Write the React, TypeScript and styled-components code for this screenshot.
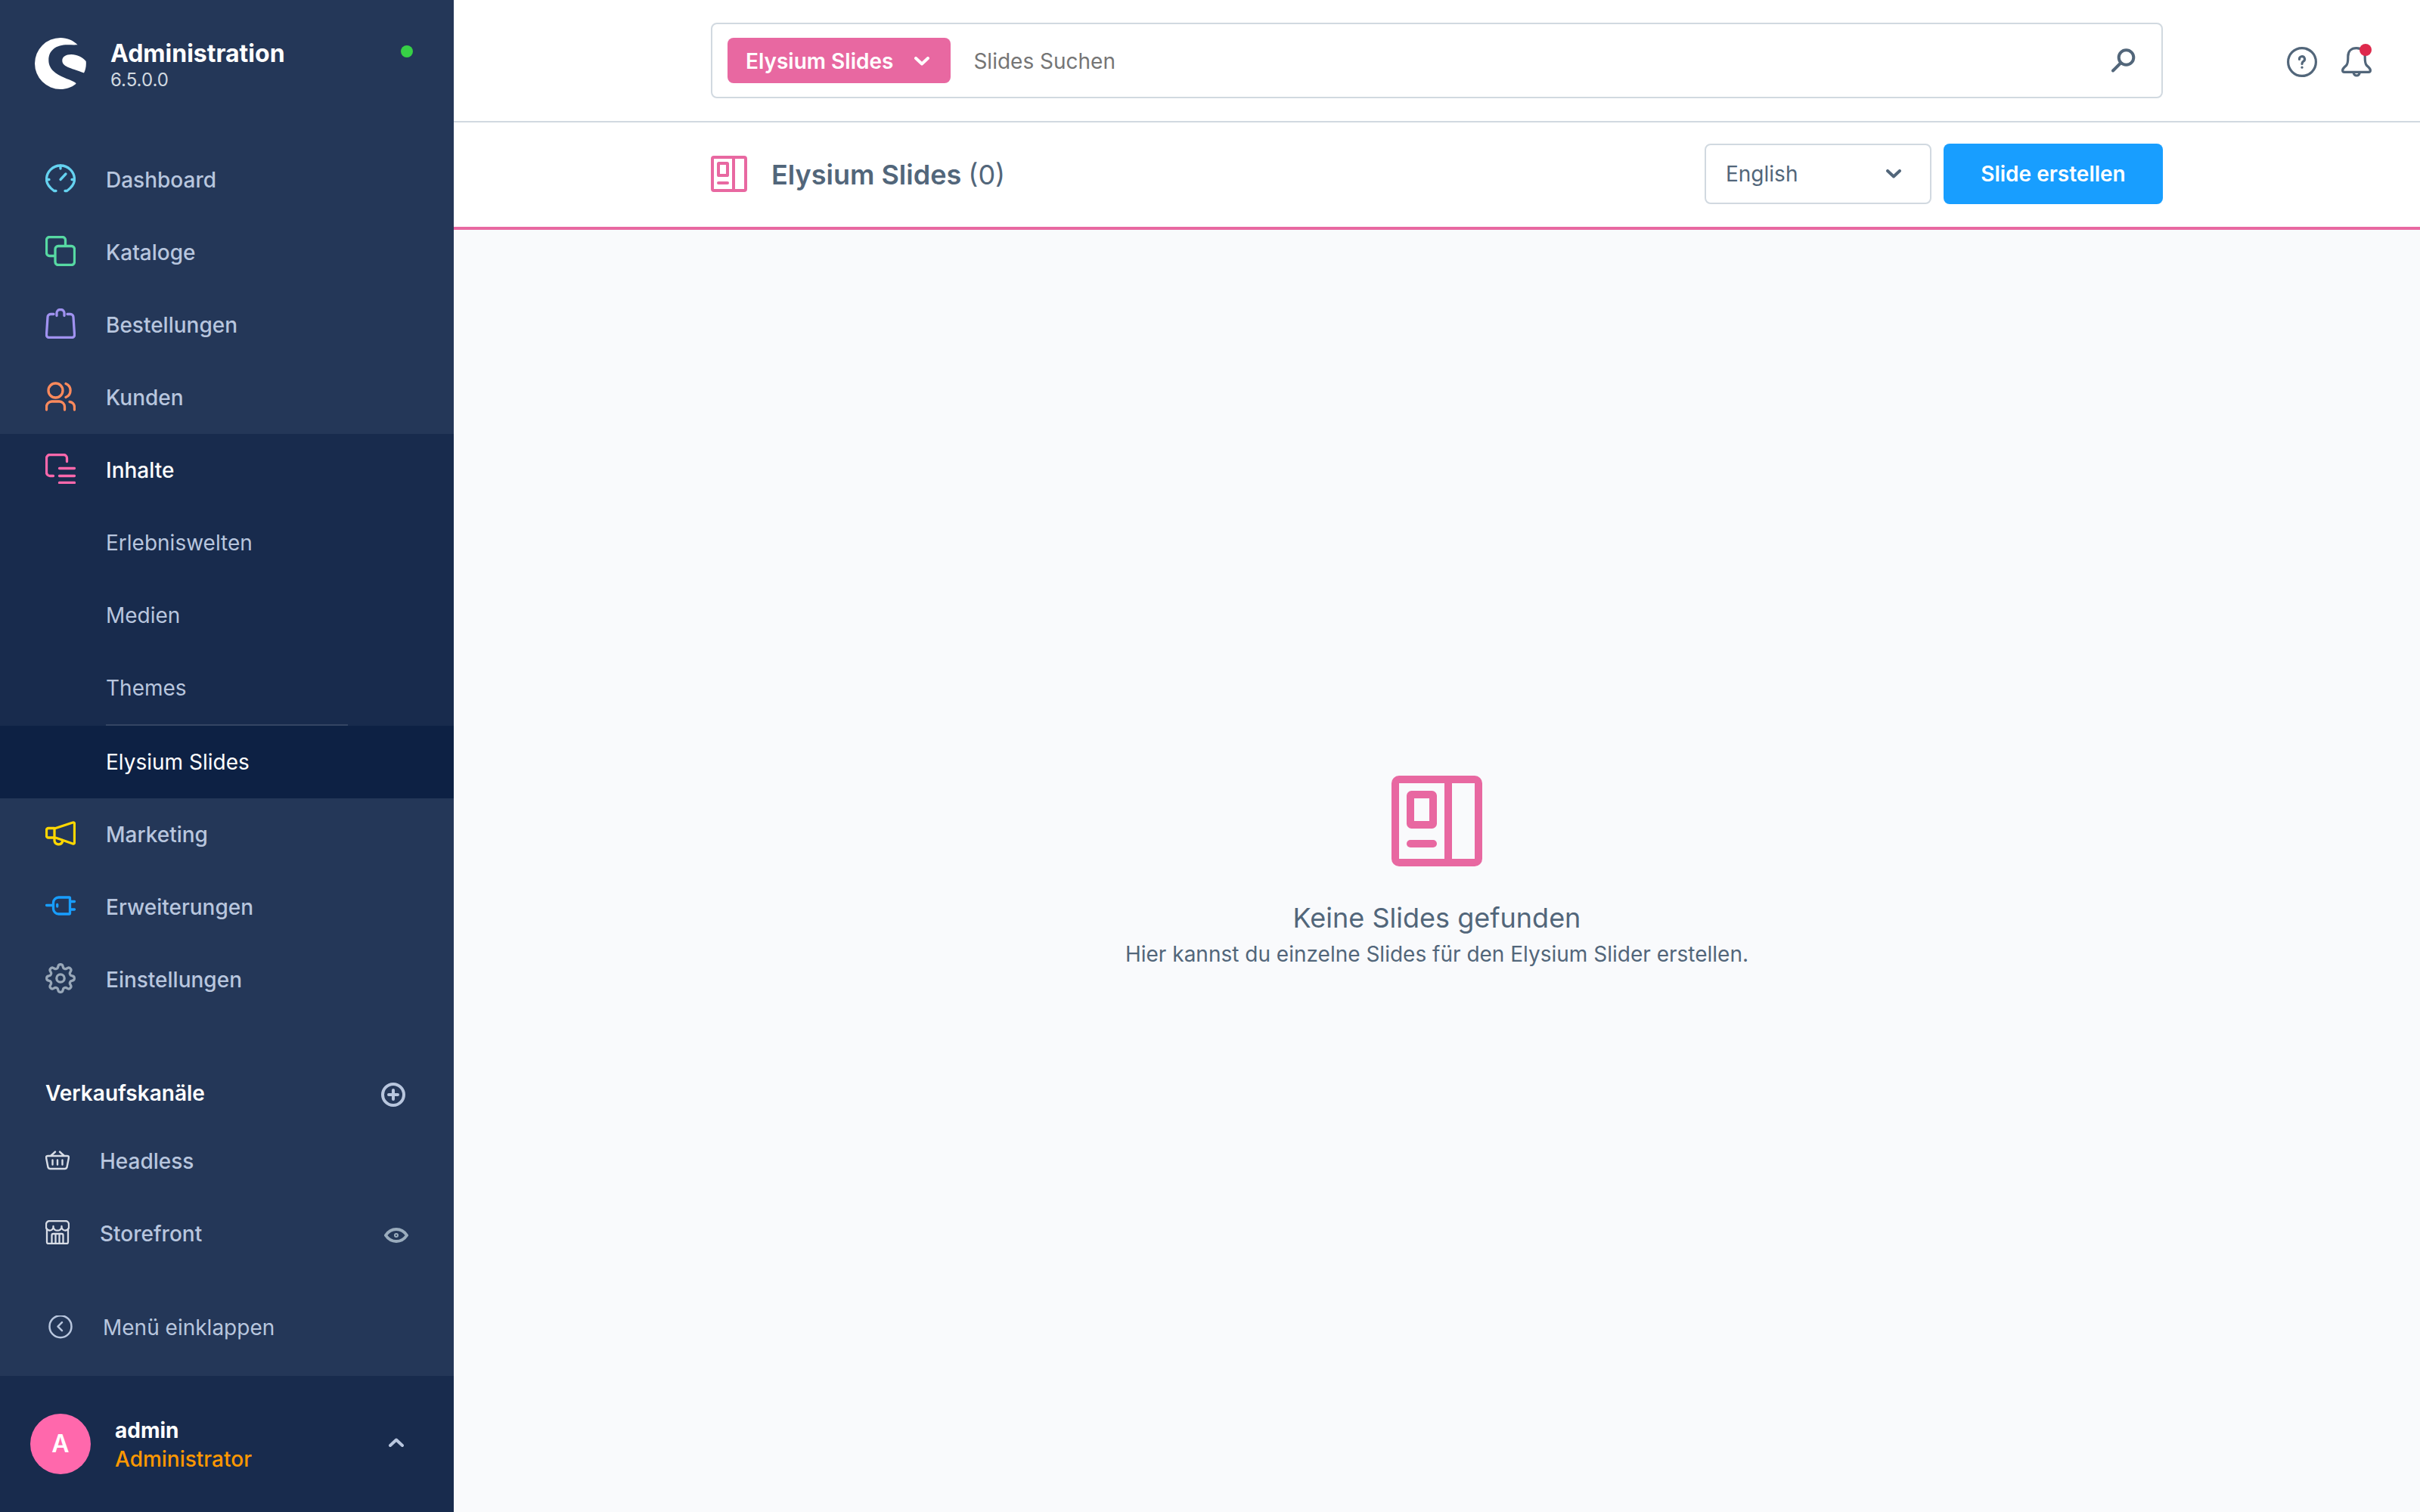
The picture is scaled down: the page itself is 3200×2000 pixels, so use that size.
import React, { useState } from 'react';
import styled, { createGlobalStyle } from 'styled-components';

const colors = {
  sidebar: '#243758',
  sidebarActive: '#182b4d',
  sidebarCurrent: '#0d2144',
  nav: '#b8c6de',
  border: '#d1d9e0',
  text: '#52667a',
  module: '#e868a1',
  primary: '#189eff',
};

const GlobalStyle = createGlobalStyle`
  * { box-sizing: border-box; }
  body { margin: 0; font-family: Inter, "Liberation Sans", sans-serif; font-size: 28px; line-height: 36px; color: ${colors.text}; background: #f9fafc; }
  button, input, select { font: inherit; color: inherit; margin: 0; padding: 0; border: 0; background: none; }
  button { cursor: pointer; }
  h1, h2, p, ul { margin: 0; padding: 0; font-weight: inherit; font-size: inherit; }
  ul { list-style: none; }
  a { color: inherit; text-decoration: none; }
  svg { display: block; flex: none; }
`;

const Layout = styled.div`
  display: grid;
  grid-template-columns: 600px minmax(0, 1fr);
  min-height: 100vh;
`;

const Sidebar = styled.aside`
  display: flex;
  flex-direction: column;
  background: ${colors.sidebar};
  color: ${colors.nav};
`;

const Brand = styled.header`
  display: flex;
  align-items: flex-start;
  height: 190px;
  padding: 50px 54px 0 46px;
`;

const BrandText = styled.div`
  flex: 1;
  padding: 2px 0 0 32px;
`;

const BrandName = styled.p`
  font-size: 32px;
  line-height: 38px;
  font-weight: 700;
  color: #fff;
`;

const Version = styled.p`
  font-size: 24px;
  line-height: 32px;
  color: #d1d9e0;
`;

const Status = styled.span`
  width: 16px;
  height: 16px;
  margin-top: 10px;
  border-radius: 50%;
  background: #37d046;
`;

const NavGroup = styled.li<{ $open?: boolean }>`
  background: ${(p) => (p.$open ? colors.sidebarActive : 'transparent')};
`;

const NavLink = styled.a<{ $active?: boolean }>`
  display: flex;
  align-items: center;
  gap: 40px;
  height: 96px;
  padding: 0 60px;
  font-weight: 500;
  color: ${(p) => (p.$active ? '#fff' : colors.nav)};

  svg { margin-bottom: 4px; }
`;

const SubLink = styled.a<{ $current?: boolean }>`
  display: flex;
  align-items: center;
  height: 96px;
  padding-left: 140px;
  color: ${(p) => (p.$current ? '#fff' : colors.nav)};
  background: ${(p) => (p.$current ? colors.sidebarCurrent : 'transparent')};
`;

const SubDivider = styled.li`
  width: 320px;
  height: 2px;
  margin-left: 140px;
  background: #344563;
`;

const Channels = styled.section`
  padding-top: 56px;
`;

const ChannelHead = styled.div`
  display: flex;
  align-items: center;
  justify-content: space-between;
  height: 88px;
  padding: 8px 64px 0 60px;
`;

const ChannelTitle = styled.h2`
  font-weight: 600;
  color: #fff;
  padding-bottom: 4px;
`;

const ChannelRow = styled.li`
  display: flex;
  align-items: center;
  height: 96px;
  padding: 0 60px;
`;

const ChannelLink = styled.a`
  display: flex;
  flex: 1;
  align-items: center;
  gap: 40px;
  font-weight: 500;

  svg { margin-bottom: 4px; }
`;

const IconButton = styled.button`
  display: flex;
  position: relative;
`;

const SidebarFoot = styled.div`
  margin-top: auto;
`;

const Collapse = styled.button`
  display: flex;
  align-items: center;
  gap: 40px;
  width: 100%;
  height: 128px;
  padding: 0 64px;
  text-align: left;
`;

const UserBar = styled.button`
  display: flex;
  align-items: center;
  width: 100%;
  height: 180px;
  padding: 0 66px 0 40px;
  text-align: left;
  background: ${colors.sidebarActive};

  svg { margin-bottom: 4px; }
`;

const Avatar = styled.span`
  display: grid;
  place-items: center;
  width: 80px;
  height: 80px;
  border-radius: 50%;
  font-size: 32px;
  font-weight: 600;
  color: #fff;
  background: #ff68ac;
`;

const UserText = styled.span`
  display: flex;
  flex: 1;
  flex-direction: column;
  padding: 2px 0 0 32px;
  line-height: 38px;
`;

const UserName = styled.strong`
  font-weight: 700;
  color: #fff;
`;

const UserRole = styled.span`
  font-weight: 500;
  color: #ff9800;
`;

const Main = styled.main`
  display: flex;
  flex-direction: column;
`;

const barColumns = `
  display: grid;
  grid-template-columns: 1fr minmax(0, 1920px) 1fr;
  align-items: center;
  background: #fff;
`;

const TopBar = styled.header`
  ${barColumns}
  height: 162px;
  border-bottom: 2px solid ${colors.border};
`;

const SearchBox = styled.form`
  display: flex;
  align-items: center;
  grid-column: 2;
  height: 100px;
  padding: 0 34px 0 20px;
  border: 2px solid ${colors.border};
  border-radius: 8px;
`;

const SearchType = styled.button`
  display: flex;
  align-items: center;
  gap: 28px;
  height: 60px;
  padding: 2px 28px 0 24px;
  border-radius: 8px;
  font-weight: 600;
  color: #fff;
  background: ${colors.module};
`;

const SearchInput = styled.input`
  flex: 1;
  min-width: 0;
  height: 60px;
  padding: 2px 30px 0;
  outline: none;

  &::placeholder { color: #757575; opacity: 1; }
`;

const TopActions = styled.div`
  display: flex;
  grid-column: 3;
  justify-content: flex-end;
  gap: 32px;
  padding: 4px 64px 0 0;
`;

const Badge = styled.span`
  position: absolute;
  top: -4px;
  right: 0;
  width: 16px;
  height: 16px;
  border-radius: 50%;
  background: #de294c;
`;

const PageBar = styled.div`
  ${barColumns}
  height: 142px;
  padding-bottom: 2px;
  border-bottom: 4px solid ${colors.module};
`;

const PageBarInner = styled.div`
  display: flex;
  align-items: center;
  grid-column: 2;
`;

const PageTitle = styled.h1`
  flex: 1;
  padding: 2px 0 0 32px;
  font-size: 36px;
  line-height: 44px;
  font-weight: 600;
`;

const Count = styled.span`
  font-weight: 400;
`;

const SelectField = styled.label`
  display: grid;
  align-items: center;
  width: 300px;
  margin-right: 16px;

  > * { grid-area: 1 / 1; }
  > svg { justify-self: end; margin-right: 40px; pointer-events: none; }
`;

const Select = styled.select`
  appearance: none;
  width: 100%;
  height: 80px;
  padding: 0 26px;
  border: 2px solid ${colors.border};
  border-radius: 8px;
  background: #fff;
`;

const CreateButton = styled.button`
  height: 80px;
  width: 290px;
  border-radius: 8px;
  font-weight: 600;
  color: #fff;
  background: ${colors.primary};
`;

const EmptyState = styled.section`
  display: flex;
  flex: 1;
  flex-direction: column;
  align-items: center;
  justify-content: center;
  text-align: center;
`;

const EmptyTitle = styled.h2`
  margin: 46px 0 10px;
  font-size: 36px;
  line-height: 44px;
`;

const EmptyText = styled.p`
  line-height: 32px;
`;

type LineIconProps = { color?: string; size?: number; width?: number; box?: number; children: React.ReactNode };

const LineIcon = ({ color = 'currentColor', size = 40, width = 3.3, box = 40, children }: LineIconProps) => (
  <svg width={size} height={size} viewBox={`0 0 ${box} ${box}`} fill="none" stroke={color} strokeWidth={width} strokeLinecap="round" strokeLinejoin="round" aria-hidden="true">
    {children}
  </svg>
);

const Logo = () => (
  <svg width="68" height="68" viewBox="0 0 68 68" fill="#fff" aria-hidden="true">
    <path d="M56.600 9.300C51 3.500 43 0 34 0A34 34 0 0 0 34 68C41.500 68 48.500 65.500 54 61.200C54.800 60.500 54.600 60 53.800 59.500C50 56 36 53 27.500 46.500C21 41.500 18.300 36 18.300 29.500C18.300 16 29 9.300 43 9.300C48 9.300 52 9.600 56.600 9.300Z" />
    <path d="M67.700 31C63 25.500 56 22 48.300 22C41 22 36.300 25 36.300 30C36.300 38 46 39.500 65 46.500C67 43 68.300 37 67.700 31Z" />
  </svg>
);

const SlidesIcon = ({ size }: { size: number }) => (
  <svg width={size} height={size} viewBox="0 0 24 24" fill="none" stroke={colors.module} strokeWidth="2" strokeLinejoin="round" strokeLinecap="round" aria-hidden="true">
    <rect x="1" y="1" width="22" height="22" rx="1" />
    <path d="M15 1V23" />
    <rect x="5" y="5" width="6" height="8" rx="0.300" />
    <path d="M5 18H11" />
  </svg>
);

const Chevron = ({ up }: { up?: boolean }) => (
  <svg width="20" height="12" viewBox="0 0 20 12" fill="none" stroke="currentColor" strokeWidth="4" strokeLinecap="round" strokeLinejoin="round" aria-hidden="true">
    <path d={up ? 'M2 10L10 2.500L18 10' : 'M2 2L10 9.500L18 2'} />
  </svg>
);

const gearPath = (() => {
  const points: string[] = [];
  for (let i = 0; i <= 160; i += 1) {
    const a = (i / 160) * Math.PI * 2;
    const r = 16 + 2.5 * Math.tanh(1.6 * Math.cos(a * 8));
    points.push(`${(20 + r * Math.sin(a)).toFixed(2)} ${(20 - r * Math.cos(a)).toFixed(2)}`);
  }
  return `M${points.join('L')}Z`;
})();

const icons = {
  dashboard: (
    <LineIcon color="#65d2f0">
      <path d="M14 36.500H11.500C6 32.500 1.500 27 1.500 21.500A18.500 18.500 0 0 1 38.500 21.500C38.500 27 34 32.500 28.500 36.500H26" />
      <path d="M20 3V7M2 21.500H5M38 21.500H35M20 21.500L27 14" />
    </LineIcon>
  ),
  catalog: (
    <LineIcon color="#57d9a3">
      <path d="M12.500 26.500H5.500A4 4 0 0 1 1.500 22.500V5.500A4 4 0 0 1 5.500 1.500H22.500A4 4 0 0 1 26.500 5.500V13" />
      <rect x="13" y="13.500" width="25.500" height="25" rx="4" />
    </LineIcon>
  ),
  orders: (
    <LineIcon color="#a092f0">
      <path d="M11 7.500H7A4 4 0 0 0 3 11.500L1.500 34.500A3.500 3.500 0 0 0 5 38.500H35A3.500 3.500 0 0 0 38.500 34.500L37 11.500A4 4 0 0 0 33 7.500H29" />
      <path d="M15 9.500V6A4.500 4.500 0 0 1 19.500 1.500H20.500A4.500 4.500 0 0 1 25 6V9.500" />
    </LineIcon>
  ),
  customers: (
    <LineIcon color="#ff8a5c">
      <circle cx="13.500" cy="12.500" r="9.500" />
      <path d="M1.500 38V34A7 7 0 0 1 8.500 27H18.500A7 7 0 0 1 25.500 34V38M27 3.500A9.700 9.700 0 0 1 27 21.500M32 27.500A7 7 0 0 1 38.500 34.500V38" />
    </LineIcon>
  ),
  content: (
    <LineIcon color="#ff68ac">
      <path d="M10.500 29.500H6A4.500 4.500 0 0 1 1.500 25V6A4.500 4.500 0 0 1 6 1.500H24A4.500 4.500 0 0 1 28.500 6V10.500" />
      <path d="M18.500 19.500H38.500M18.500 29.500H38.500M18.500 38.500H38.500" />
    </LineIcon>
  ),
  marketing: (
    <LineIcon color="#ffd700">
      <path d="M12 14L36.200 6A1.700 1.700 0 0 1 38.500 7.600V32.400A1.700 1.700 0 0 1 36.200 34L12 25.500M12 13.500V26H4A2.500 2.500 0 0 1 1.500 23.500V16A2.500 2.500 0 0 1 4 13.500Z" />
      <path d="M12 26V30A5.500 5.500 0 0 0 22.500 31.500V29.500" />
    </LineIcon>
  ),
  extensions: (
    <LineIcon color="#189eff">
      <path d="M31.500 9H17.500A7 7 0 0 0 10.500 16V24A7 7 0 0 0 17.500 31H31.500Q32.500 31 32.500 30V10Q32.500 9 31.500 9Z" />
      <path d="M1.500 19.500H10M33 14.500H38.500M33 25H38.500M15.700 18.500V21" />
    </LineIcon>
  ),
  settings: (
    <LineIcon color="#98a7b8">
      <path d={gearPath} />
      <circle cx="20" cy="20" r="5.200" />
    </LineIcon>
  ),
};

const contentPages = ['Erlebniswelten', 'Medien', 'Themes'];

const before = [
  { label: 'Dashboard', icon: icons.dashboard },
  { label: 'Kataloge', icon: icons.catalog },
  { label: 'Bestellungen', icon: icons.orders },
  { label: 'Kunden', icon: icons.customers },
];

const after = [
  { label: 'Marketing', icon: icons.marketing },
  { label: 'Erweiterungen', icon: icons.extensions },
  { label: 'Einstellungen', icon: icons.settings },
];

const NavItems = ({ items }: { items: typeof before }) => (
  <>
    {items.map((item) => (
      <NavGroup key={item.label}>
        <NavLink href="#">
          {item.icon}
          {item.label}
        </NavLink>
      </NavGroup>
    ))}
  </>
);

const AdminMenu = () => (
  <Sidebar>
    <Brand>
      <Logo />
      <BrandText>
        <BrandName>Administration</BrandName>
        <Version>6.5.0.0</Version>
      </BrandText>
      <Status />
    </Brand>
    <nav>
      <ul>
        <NavItems items={before} />
        <NavGroup $open>
          <NavLink href="#" $active>
            {icons.content}
            Inhalte
          </NavLink>
          <ul>
            {contentPages.map((page) => (
              <li key={page}>
                <SubLink href="#">{page}</SubLink>
              </li>
            ))}
            <SubDivider role="separator" />
            <li>
              <SubLink href="#" $current aria-current="page">Elysium Slides</SubLink>
            </li>
          </ul>
        </NavGroup>
        <NavItems items={after} />
      </ul>
    </nav>
    <Channels>
      <ChannelHead>
        <ChannelTitle>Verkaufskanäle</ChannelTitle>
        <IconButton type="button" aria-label="Verkaufskanal hinzufügen">
          <LineIcon size={32} box={32} width={4}>
            <circle cx="16" cy="16" r="14" />
            <path d="M16 10V22M10 16H22" />
          </LineIcon>
        </IconButton>
      </ChannelHead>
      <ul>
        <ChannelRow>
          <ChannelLink href="#">
            <LineIcon size={32} box={32} width={2.4} color="#d8dde6">
              <path d="M3 11H29A2 2 0 0 1 31 13L28.500 26A3 3 0 0 1 26 28H6A3 3 0 0 1 3.500 26L1 13A2 2 0 0 1 3 11ZM7.500 10.500L13 5.500M24.500 10.500L19 5.500" />
              <path d="M9.500 16.500V22.500M16 16.500V22.500M22.500 16.500V22.500" />
            </LineIcon>
            Headless
          </ChannelLink>
        </ChannelRow>
        <ChannelRow>
          <ChannelLink href="#">
            <LineIcon size={32} box={32} width={2.3} color="#d8dde6">
              <path d="M2 11.500V29A2 2 0 0 0 4 31H28A2 2 0 0 0 30 29V11.500" />
              <path d="M5.500 1H26.500A4.500 4.500 0 0 1 31 5.500V8A4.800 4.800 0 0 1 21.500 9.500A5.700 5.700 0 0 1 10.500 9.500A4.800 4.800 0 0 1 1 8V5.500A4.500 4.500 0 0 1 5.500 1ZM10.500 9.500V8M21.500 9.500V8" />
              <path d="M8.500 31V20A2 2 0 0 1 10.500 18H21.500A2 2 0 0 1 23.500 20V31M13.500 18V31M18.500 18V31" />
            </LineIcon>
            Storefront
          </ChannelLink>
          <IconButton type="button" aria-label="Storefront anzeigen">
            <LineIcon size={32} box={32} width={4} color="#9aacbd">
              <path d="M2 18C6 12 10.500 10 16 10S26 12 30 18C26 24 21.500 26 16 26S6 24 2 18Z" />
              <circle cx="16" cy="18" r="1" />
            </LineIcon>
          </IconButton>
        </ChannelRow>
      </ul>
    </Channels>
    <SidebarFoot>
      <Collapse type="button">
        <LineIcon size={32} box={32} width={2.5}>
          <circle cx="16" cy="14.700" r="14.500" />
          <path d="M18 9.200L12.500 14.700L18 20.200" />
        </LineIcon>
        Menü einklappen
      </Collapse>
      <UserBar type="button">
        <Avatar>A</Avatar>
        <UserText>
          <UserName>admin</UserName>
          <UserRole>Administrator</UserRole>
        </UserText>
        <Chevron up />
      </UserBar>
    </SidebarFoot>
  </Sidebar>
);

const App = () => {
  const [term, setTerm] = useState('');

  return (
    <Layout>
      <GlobalStyle />
      <AdminMenu />
      <Main>
        <TopBar>
          <SearchBox role="search" onSubmit={(event) => event.preventDefault()}>
            <SearchType type="button">
              Elysium Slides
              <Chevron />
            </SearchType>
            <SearchInput type="text" aria-label="Slides Suchen" placeholder="Slides Suchen" value={term} onChange={(event) => setTerm(event.target.value)} />
            <IconButton type="submit" aria-label="Suchen">
              <LineIcon size={32} box={32} width={4}>
                <circle cx="19.500" cy="12" r="9.800" />
                <path d="M12 19.500L2 29.500" />
              </LineIcon>
            </IconButton>
          </SearchBox>
          <TopActions>
            <IconButton type="button" aria-label="Hilfe">
              <LineIcon width={3.2}>
                <circle cx="20" cy="20" r="18.400" />
                <path d="M16.500 16.500A3.500 3.500 0 1 1 21.800 19.200C20.500 20 20 20.800 20 22.500" />
                <path d="M20 27V27.200" />
              </LineIcon>
            </IconButton>
            <IconButton type="button" aria-label="Benachrichtigungen">
              <LineIcon width={3.2}>
                <path d="M20 1.600C13 1.600 8.800 6 8.800 12.500C8.800 18 9 22 6.500 24.500C4 27 1.600 28.500 1.600 31C1.600 32.500 2.500 33.300 4 33.300H36C37.500 33.300 38.400 32.500 38.400 31C38.400 28.500 36 27 33.500 24.500C31 22 31.200 18 31.200 12.500C31.200 6 27 1.600 20 1.600Z" />
                <path d="M16.200 34A4 4 0 0 0 24.200 34" />
              </LineIcon>
              <Badge />
            </IconButton>
          </TopActions>
        </TopBar>
        <PageBar>
          <PageBarInner>
            <SlidesIcon size={48} />
            <PageTitle>
              Elysium Slides <Count>(0)</Count>
            </PageTitle>
            <SelectField>
              <Select aria-label="Sprache" defaultValue="en">
                <option value="en">English</option>
                <option value="de">Deutsch</option>
              </Select>
              <Chevron />
            </SelectField>
            <CreateButton type="button">Slide erstellen</CreateButton>
          </PageBarInner>
        </PageBar>
        <EmptyState>
          <SlidesIcon size={120} />
          <EmptyTitle>Keine Slides gefunden</EmptyTitle>
          <EmptyText>Hier kannst du einzelne Slides für den Elysium Slider erstellen.</EmptyText>
        </EmptyState>
      </Main>
    </Layout>
  );
};

export default App;
